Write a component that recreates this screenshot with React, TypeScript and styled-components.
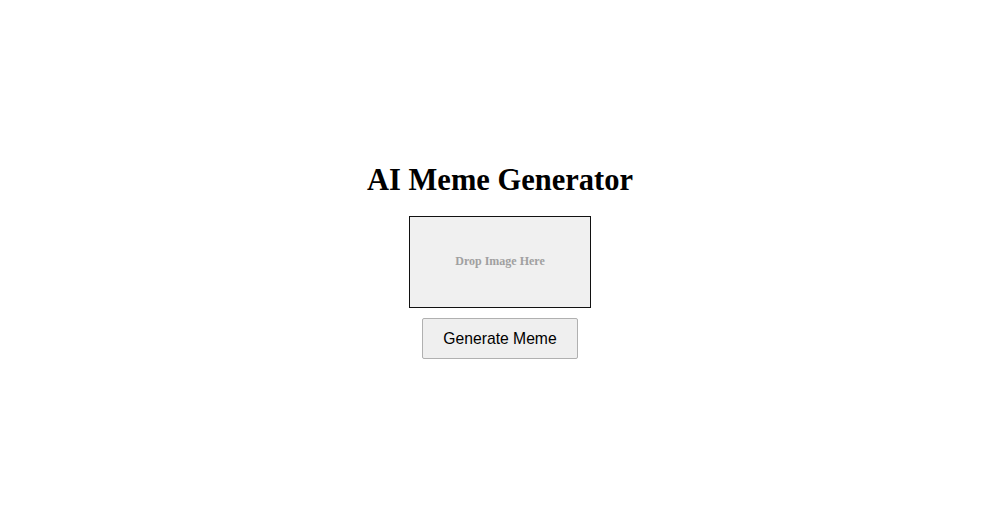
import React from 'react';
import styled, { createGlobalStyle } from 'styled-components';

const GlobalStyle = createGlobalStyle`
  body {
    margin: 0;
    background: #fff;
    font-family: "Liberation Serif", "Times New Roman", serif;
  }
`;

const Page = styled.div`
  display: flex;
  flex-direction: column;
  justify-content: center;
  align-items: center;
  height: 100vh;
`;

const Title = styled.h1`
  margin: 0 0 18px 0;
  font-size: 30.5px;
  font-weight: bold;
  color: #000;
`;

const DropZone = styled.div`
  display: flex;
  justify-content: center;
  align-items: center;
  width: 180px;
  height: 90px;
  border: 1px solid #111;
  background: #f0f0f0;
  color: #a0a0a0;
  font-size: 12px;
  font-weight: bold;
  margin-bottom: 10px;
`;

const Button = styled.button`
  padding: 10px 20px;
  font-family: "Liberation Sans", Arial, sans-serif;
  font-size: 15.7px;
  line-height: 19px;
  color: #000;
  background: #efefef;
  border: 1px solid #b0b0b0;
  border-radius: 2px;
  cursor: pointer;
`;

const App = () => {
  return (
    <>
      <GlobalStyle />
      <Page>
        <Title>AI Meme Generator</Title>
        <DropZone>Drop Image Here</DropZone>
        <Button>Generate Meme</Button>
      </Page>
    </>
  );
};

export default App;
